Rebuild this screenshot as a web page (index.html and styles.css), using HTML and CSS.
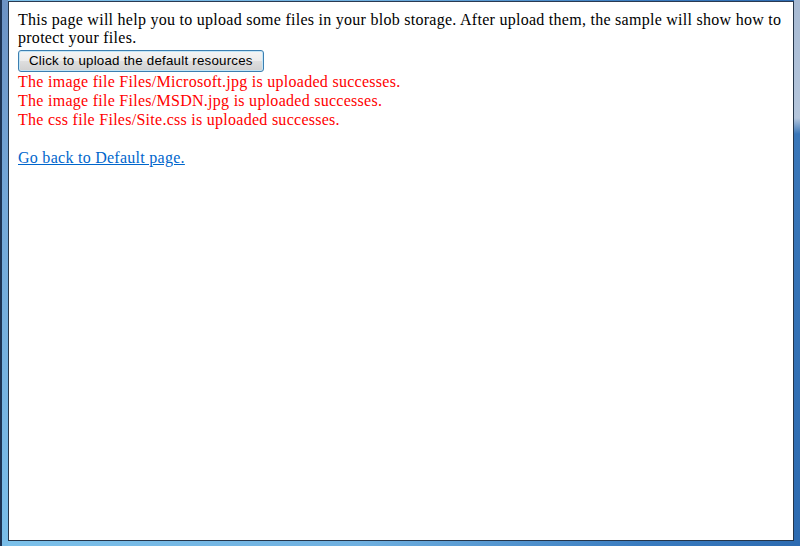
FILE: index.html
```html
<!DOCTYPE html>
<html>
<head>
<meta charset="utf-8">
<title>Upload resources</title>
<link rel="stylesheet" href="styles.css">
</head>
<body>
<div class="window">
  <div class="page">
    <p class="intro">This page will help you to upload some files in your blob storage. After upload them, the sample will show how to protect your files.</p>
    <div class="actions"><button class="btn" type="button">Click to upload the default resources</button></div>
    <div class="messages">
      <div class="msg">The image file Files/Microsoft.jpg is uploaded successes.</div>
      <div class="msg">The image file Files/MSDN.jpg is uploaded successes.</div>
      <div class="msg">The css file Files/Site.css is uploaded successes.</div>
    </div>
    <div class="back"><a href="#" class="link">Go back to Default page.</a></div>
  </div>
</div>
</body>
</html>
```

FILE: styles.css
```css
html, body {
  margin: 0;
  padding: 0;
  width: 800px;
  height: 546px;
  overflow: hidden;
}

.window {
  box-sizing: border-box;
  width: 800px;
  height: 546px;
  border-left: 2px solid #1d3353;
  padding: 1px 6px 5px 6px;
  background:
    linear-gradient(to bottom, #a7bad3 0px, #b5c6dc 118px, #3a77b9 134px, #2d6bb1 100%) right top / 6px 541px no-repeat,
    linear-gradient(to bottom, #6c92c4 0px, #73a7d8 200px, #79bde8 100%) left top / 6px 546px no-repeat,
    linear-gradient(to right, #7cc1ea 0%, #6fb0e0 45%, #3a7cc0 80%, #2d6bb1 100%);
}

.page {
  box-sizing: border-box;
  height: 100%;
  background: #ffffff;
  border: 1px solid #24354a;
  border-top-color: #2a3a52;
  padding: 8px 8px 0 9px;
  font-family: "Liberation Serif", "Times New Roman", serif;
  font-size: 16px;
  letter-spacing: 0.27px;
  color: #000000;
}

.intro {
  margin: 0;
  line-height: 18px;
  padding-top: 1px;
}

.actions {
  margin-top: 3px;
  height: 22px;
}

.btn {
  box-sizing: border-box;
  height: 22px;
  margin: 0;
  padding: 0 10px 1px 10px;
  font-family: "Liberation Sans", Arial, sans-serif;
  font-size: 13.33px;
  letter-spacing: 0.22px;
  color: #000000;
  border: 1px solid #3c7fb1;
  border-radius: 3px;
  background: linear-gradient(to bottom, #f4f4f4 0%, #ececec 48%, #dedede 52%, #d0d0d0 100%);
  box-shadow: inset 0 0 0 1px #c4e5f6;
  cursor: default;
}

.messages {
  color: #ff0000;
  line-height: 19px;
}

.back {
  line-height: 19px;
  margin-top: 19px;
}

.link {
  color: #0066cc;
  text-decoration: underline;
}
```
